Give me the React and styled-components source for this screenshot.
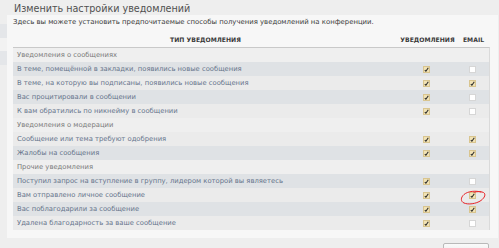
import React from "react";
import styled, { createGlobalStyle } from "styled-components";

const Global = createGlobalStyle`
  html, body { margin: 0; padding: 0; background: #eeeeee; }
  body { font-family: "DejaVu Sans", Verdana, sans-serif; overflow: hidden; }
`;

const Page = styled.div`
  display: flex;
  width: 499px;
  height: 248px;
  overflow: hidden;
`;

const Sidebar = styled.div`
  width: 7px;
  flex: none;
  display: flex;
  flex-direction: column;
  padding-top: 24px;
`;

const SideBand = styled.div`
  height: ${(p) => p.$h}px;
  background: ${(p) => p.$bg};
`;

const Main = styled.div`
  flex: 1;
  display: flex;
  flex-direction: column;
  padding-right: 1px;
`;

const Title = styled.h1`
  margin: 0;
  height: 17px;
  padding: 2px 0 0 7px;
  box-sizing: border-box;
  font-size: 9.6px;
  font-weight: normal;
  color: #505050;
  line-height: 13px;
`;

const Panel = styled.div`
  background: #f7f7f7;
  padding: 2px 8px 8px 6px;
  display: flex;
  flex-direction: column;
`;

const Intro = styled.p`
  margin: 0;
  font-size: 6.9px;
  line-height: 10px;
  color: #3a3a3a;
`;

const Grid = styled.div`
  display: grid;
  grid-template-columns: 1fr 59px 33px;
`;

const HeadRow = styled(Grid)`
  height: 20px;
  align-items: center;
`;

const HeadCell = styled.div`
  text-align: center;
  font-size: 6.1px;
  font-weight: bold;
  color: #3a3a3a;
  text-transform: uppercase;
  padding-top: 4px;
`;

const Table = styled.div`
  border-top: 1px solid #c9c9c9;
  border-right: 1px solid #dadada;
  display: flex;
  flex-direction: column;
`;

const Row = styled(Grid)`
  height: 14px;
  align-items: stretch;
  background: ${(p) =>
    p.$kind === "section" ? "#efefef" : p.$kind === "dark" ? "#dfe2e5" : "#ebebeb"};
`;

const Label = styled.div`
  display: flex;
  align-items: center;
  padding-left: 4px;
  font-size: 6.8px;
  color: ${(p) => (p.$section ? "#7a7a7a" : "#66748b")};
  white-space: nowrap;
`;

const BoxCell = styled.div`
  position: relative;
  display: flex;
  justify-content: center;
  align-items: center;
`;

const Mark = styled.svg`
  position: absolute;
  left: 3px;
  top: 1px;
  overflow: visible;
  pointer-events: none;
`;

const Footer = styled.div`
  display: flex;
  justify-content: flex-end;
  padding: 5px 9px 0 0;
`;

const Button = styled.div`
  width: 44px;
  height: 14px;
  border: 1px solid #b9b9b9;
  border-radius: 2px;
  background: linear-gradient(#fafafa, #e6e6e6);
`;

function Check({ on }) {
  return (
    <svg width="7" height="7" viewBox="0 0 7 7">
      {on ? (
        <>
          <rect x="0.5" y="0.5" width="6" height="6" fill="#f1e2b4" stroke="#d9c58f" />
          <path d="M1.8 4.2 L2.9 5.2 L5.3 1.8" fill="none" stroke="#2b2b2b" strokeWidth="1.1" />
        </>
      ) : (
        <rect x="0.5" y="0.5" width="6" height="6" fill="#ffffff" stroke="#d6d6d6" />
      )}
    </svg>
  );
}

const rows = [
  { kind: "section", label: "Уведомления о сообщениях" },
  { kind: "dark", label: "В теме, помещённой в закладки, появились новые сообщения", v: [1, 0] },
  { kind: "light", label: "В теме, на которую вы подписаны, появились новые сообщения", v: [1, 1] },
  { kind: "dark", label: "Вас процитировали в сообщении", v: [1, 0] },
  { kind: "light", label: "К вам обратились по никнейму в сообщении", v: [1, 0] },
  { kind: "section", label: "Уведомления о модерации" },
  { kind: "light", label: "Сообщение или тема требуют одобрения", v: [1, 1] },
  { kind: "dark", label: "Жалобы на сообщения", v: [1, 1] },
  { kind: "section", label: "Прочие уведомления" },
  { kind: "dark", label: "Поступил запрос на вступление в группу, лидером которой вы являетесь", v: [1, 0] },
  { kind: "light", label: "Вам отправлено личное сообщение", v: [1, 1], circled: true },
  { kind: "dark", label: "Вас поблагодарили за сообщение", v: [1, 1] },
  { kind: "light", label: "Удалена благодарность за ваше сообщение", v: [1, 0] },
];

const sideBands = [
  { h: 14, bg: "#e4e6e9" },
  { h: 13, bg: "#f2f2f2" },
  { h: 14, bg: "#e4e6e9" },
  { h: 13, bg: "#eeeeee" },
];

export default function App() {
  return (
    <>
      <Global />
      <Page>
        <Sidebar>
          {sideBands.map((b, i) => (
            <SideBand key={i} $h={b.h} $bg={b.bg} />
          ))}
        </Sidebar>
        <Main>
          <Title>Изменить настройки уведомлений</Title>
          <Panel>
            <Intro>
              Здесь вы можете установить предпочитаемые способы получения уведомлений на конференции.
            </Intro>
            <HeadRow>
              <HeadCell>Тип уведомления</HeadCell>
              <HeadCell>Уведомления</HeadCell>
              <HeadCell>Email</HeadCell>
            </HeadRow>
            <Table>
              {rows.map((r, i) => (
                <Row key={i} $kind={r.kind}>
                  <Label $section={r.kind === "section"}>{r.label}</Label>
                  <BoxCell>{r.v && <Check on={!!r.v[0]} />}</BoxCell>
                  <BoxCell>
                    {r.v && <Check on={!!r.v[1]} />}
                    {r.circled && (
                      <Mark width="28" height="16" viewBox="0 0 28 16">
                        <path
                          d="M22 3 C17 1.5 9 2 5 5.5 C1.5 8.5 1.5 12.5 5 14 C9 15.8 17 15 22 11.5 C26 8.5 27 5 24.5 3.5 C22 2.2 18 2.5 15 3.2"
                          fill="none"
                          stroke="#e8262a"
                          strokeWidth="1"
                          strokeLinecap="round"
                        />
                      </Mark>
                    )}
                  </BoxCell>
                </Row>
              ))}
            </Table>
          </Panel>
          <Footer>
            <Button />
          </Footer>
        </Main>
      </Page>
    </>
  );
}
